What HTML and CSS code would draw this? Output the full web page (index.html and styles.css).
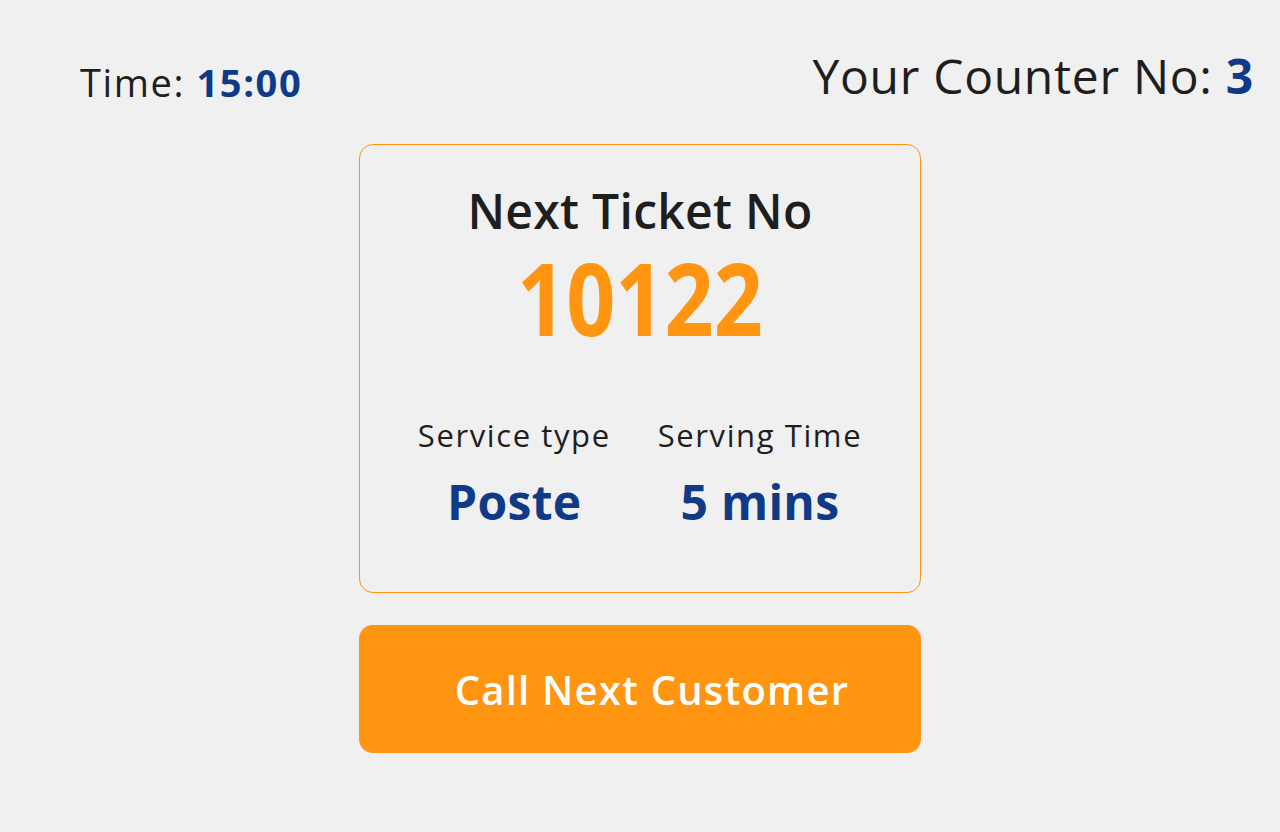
FILE: index.html
```html
<!DOCTYPE html>
<html lang="en">
<head>
<meta charset="utf-8">
<title>Counter</title>
<link rel="stylesheet" href="styles.css">
</head>
<body>
<div class="page">
  <header class="top">
    <div class="time">Time: <span class="accent">15:00</span></div>
    <div class="counter">Your Counter No: <span class="accent">3</span></div>
  </header>
  <main class="main">
    <section class="card">
      <h1 class="card-title">Next Ticket No</h1>
      <div class="ticket">10122</div>
      <div class="details">
        <div class="detail">
          <div class="detail-label">Service type</div>
          <div class="detail-value">Poste</div>
        </div>
        <div class="detail">
          <div class="detail-label">Serving Time</div>
          <div class="detail-value">5 mins</div>
        </div>
      </div>
    </section>
    <button class="call-btn">Call Next Customer</button>
  </main>
</div>
</body>
</html>
```
FILE: styles.css
```css
* { box-sizing: border-box; }
html, body { margin: 0; padding: 0; }
body {
  background: #f0f0f0;
  color: #1e1e1e;
  font-family: "Open Sans", "DejaVu Sans", sans-serif;
  width: 1280px;
  height: 832px;
  overflow: hidden;
}
.page { display: flex; flex-direction: column; }
.top {
  display: flex;
  justify-content: space-between;
  align-items: flex-end;
  padding: 50px 26px 0 80px;
  height: 104px;
}
.time { font-size: 38px; line-height: 1; padding-bottom: 3px; letter-spacing: 1.6px; }
.counter { font-size: 48px; line-height: 1; padding-bottom: 4px; letter-spacing: 0.7px; }
.accent { color: #0f3a87; font-weight: 700; }
.main {
  display: flex;
  flex-direction: column;
  align-items: center;
  padding-top: 40px;
  gap: 32px;
}
.card {
  width: 562px;
  height: 449px;
  border: 1px solid #ff9511;
  border-radius: 14px;
  display: flex;
  flex-direction: column;
  align-items: center;
  padding-top: 38px;
}
.card-title {
  margin: 0;
  font-size: 48px;
  font-weight: 600;
  line-height: 56px;
  letter-spacing: 0.3px;
}
.ticket {
  display: inline-block;
  color: #ff9511;
  font-size: 100px;
  font-weight: 700;
  line-height: 100px;
  margin-top: 8px;
  letter-spacing: 0;
  transform: scaleX(0.86);
}
.details {
  display: flex;
  gap: 47px;
  margin-top: 68px;
}
.detail { display: flex; flex-direction: column; align-items: center; }
.detail-label { font-size: 31px; line-height: 40px; letter-spacing: 1.6px; }
.detail-value {
  color: #0f3a87;
  font-size: 48px;
  font-weight: 700;
  line-height: 60px;
  margin-top: 17px;
  letter-spacing: 0.3px;
}
.call-btn {
  width: 562px;
  height: 128px;
  border: none;
  border-radius: 14px;
  background: #ff9511;
  color: #ffffff;
  font-family: inherit;
  font-size: 40px;
  font-weight: 600;
  letter-spacing: 1.2px;
  padding: 0 0 0 24px;
}
```
